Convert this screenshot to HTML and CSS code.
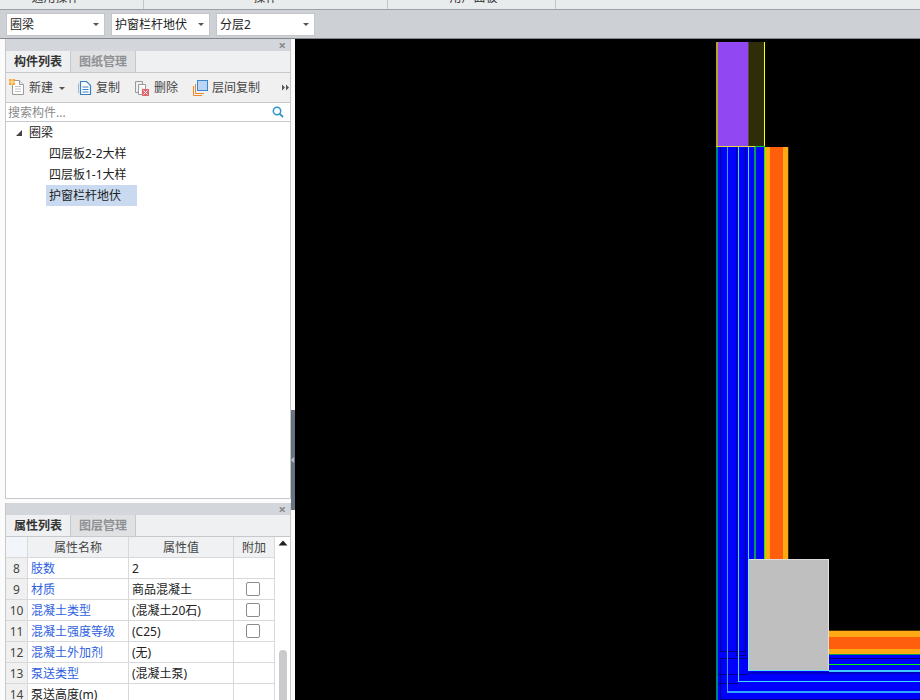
FILE: index.html
```html
<!DOCTYPE html>
<html lang="zh">
<head>
<meta charset="utf-8">
<title>圈梁</title>
<link rel="stylesheet" href="styles.css">
</head>
<body>
<div class="app">
  <div class="ribbon">
    <div class="rib rib-a"><span>通用操作</span></div>
    <div class="rib rib-b"><span>操作</span></div>
    <div class="rib rib-c"><span>用户面板</span></div>
  </div>
  <div class="selects">
    <div class="sel"><span>圈梁</span><i class="caret"></i></div>
    <div class="sel"><span>护窗栏杆地伏</span><i class="caret"></i></div>
    <div class="sel"><span>分层2</span><i class="caret"></i></div>
  </div>
  <div class="main">
    <div class="side">
      <section class="panel panel-top">
        <div class="ptitle"><span class="close">×</span></div>
        <div class="tabs">
          <div class="tab on">构件列表</div>
          <div class="tab off">图纸管理</div>
        </div>
        <div class="tools">
          <div class="tool t-new">
            <svg width="18" height="18" viewBox="0 0 18 18"><path d="M3.500 1.500H10.500L14.500 5.500V15.500H3.500Z" fill="#fff" stroke="#9a9a9a"/><path d="M10.500 1.500V5.500H14.500" fill="#eee" stroke="#9a9a9a"/><path d="M6 7.500H12M6 10H12M6 12.500H12" stroke="#c4c4c4"/><rect x="0" y="0" width="6" height="6" fill="#f9a83c"/><path d="M0 3H6M3 0V6" stroke="#fde6b8"/></svg>
            <span>新建</span><i class="caret mini"></i>
          </div>
          <div class="tool t-copy">
            <svg width="16" height="16" viewBox="0 0 16 16"><path d="M3.500 1.500H9.500L13.500 5.500V14.500H3.500Z" fill="#fff" stroke="#3a7fc4" stroke-width="1.200"/><path d="M1.500 3.500V13" stroke="#9db9d6"/><path d="M5.500 7H11.500M5.500 9.500H11.500M5.500 12H11.500" stroke="#3a7fc4"/></svg>
            <span>复制</span>
          </div>
          <div class="tool t-del">
            <svg width="16" height="16" viewBox="0 0 16 16"><path d="M1.500 1.500H8.500V4.500M1.500 1.500V12.500H4" fill="none" stroke="#9a9a9a"/><path d="M4.500 4.500H11.500V9M4.500 4.500V14.500H8" fill="#fff" stroke="#9a9a9a"/><rect x="8" y="9" width="7" height="7" fill="#e2636b"/><path d="M9.500 10.500L13.500 14.500M13.500 10.500L9.500 14.500" stroke="#fff"/></svg>
            <span>删除</span>
          </div>
          <div class="tool t-floor">
            <svg width="16" height="16" viewBox="0 0 16 16"><path d="M1.500 6V15.500H10" fill="none" stroke="#ee8a2e"/><path d="M3.500 4V13.500H12" fill="none" stroke="#ee8a2e"/><rect x="5.500" y="0.500" width="10" height="10" fill="#b9d6f7" stroke="#3d86cf"/></svg>
            <span>层间复制</span>
          </div>
          <div class="more">
            <svg width="7" height="7" viewBox="0 0 7 7"><path d="M0 0.500L3 3.500L0 6.500ZM4 0.500L7 3.500L4 6.500Z" fill="#555"/></svg>
          </div>
        </div>
        <div class="search">
          <span class="ph">搜索构件...</span>
          <svg width="12" height="12" viewBox="0 0 12 12"><circle cx="5" cy="5" r="3.700" fill="none" stroke="#2f95c8" stroke-width="1.500"/><path d="M7.800 7.800L11 11" stroke="#2f95c8" stroke-width="1.800"/></svg>
        </div>
        <div class="tree">
          <div class="node root"><i class="arrow"></i><span>圈梁</span></div>
          <div class="node leaf"><span>四层板2-2大样</span></div>
          <div class="node leaf"><span>四层板1-1大样</span></div>
          <div class="node leaf sel-row"><span>护窗栏杆地伏</span></div>
        </div>
      </section>
      <section class="panel panel-bot">
        <div class="ptitle"><span class="close">×</span></div>
        <div class="tabs">
          <div class="tab on">属性列表</div>
          <div class="tab off">图层管理</div>
        </div>
        <div class="props">
          <table class="grid">
            <colgroup><col class="c0"><col class="c1"><col class="c2"><col class="c3"></colgroup>
            <thead><tr><th class="corner"></th><th>属性名称</th><th>属性值</th><th>附加</th></tr></thead>
            <tbody>
              <tr><td class="n">8</td><td class="k">肢数</td><td>2</td><td></td></tr>
              <tr><td class="n">9</td><td class="k">材质</td><td>商品混凝土</td><td class="chk"><i class="box"></i></td></tr>
              <tr><td class="n">10</td><td class="k">混凝土类型</td><td>(混凝土20石)</td><td class="chk"><i class="box"></i></td></tr>
              <tr><td class="n">11</td><td class="k">混凝土强度等级</td><td>(C25)</td><td class="chk"><i class="box"></i></td></tr>
              <tr><td class="n">12</td><td class="k">混凝土外加剂</td><td>(无)</td><td></td></tr>
              <tr><td class="n">13</td><td class="k">泵送类型</td><td>(混凝土泵)</td><td></td></tr>
              <tr><td class="n">14</td><td class="k plain">泵送高度(m)</td><td></td><td></td></tr>
            </tbody>
          </table>
          <div class="vbar">
            <svg class="up" width="10" height="6" viewBox="0 0 10 6"><path d="M0.500 5.500L5 0.500L9.500 5.500Z" fill="#222"/></svg>
            <div class="thumb"></div>
          </div>
        </div>
      </section>
    </div>
    <div class="splitter"><div class="grip"><i></i></div></div>
    <div class="canvas">
      <svg class="cad" width="625" height="661" viewBox="295 39 625 661" shape-rendering="crispEdges">
        <rect x="295" y="39" width="625" height="661" fill="#000"/>
        <rect x="716" y="42" width="33" height="104" fill="#9148f2"/>
        <rect x="749" y="42" width="15" height="104" fill="#2f2d08"/>
        <rect x="716" y="42" width="2" height="104" fill="#b8a52c"/>
        <rect x="748" y="42" width="1" height="104" fill="#5a4640"/>
        <rect x="764" y="42" width="1" height="105" fill="#ffff00"/>
        <rect x="716" y="146" width="39" height="1" fill="#e8d83c"/>

        <rect x="716" y="147" width="49" height="553" fill="#0000ff"/>
        <rect x="716" y="655" width="204" height="45" fill="#0000ff"/>
        <rect x="765" y="147" width="23" height="413" fill="#ffaa14"/>
        <rect x="770" y="147" width="13" height="413" fill="#ff5f0c"/>
        <rect x="788" y="147" width="1" height="413" fill="#3a2a08"/>
        <rect x="764" y="147" width="1" height="413" fill="#00ff00"/>
        <rect x="754" y="147" width="2" height="413" fill="#00a050"/>
        <rect x="755" y="146" width="10" height="1" fill="#00d040"/>

        <rect x="716" y="147" width="2" height="553" fill="#008478"/>
        <rect x="720" y="147" width="1" height="505" fill="#00007a"/>
        <rect x="720" y="651" width="26" height="1" fill="#00007a"/>
        <rect x="745" y="147" width="1" height="508" fill="#00007a"/>
        <rect x="736" y="147" width="1" height="508" fill="#00007a"/>
        <rect x="736" y="655" width="10" height="1" fill="#00007a"/>
        <rect x="720" y="658" width="200" height="1" fill="#00007a"/>
        <rect x="720" y="658" width="1" height="42" fill="#00007a"/>
        <rect x="718" y="674" width="30" height="1" fill="#00007a"/>
        <rect x="718" y="683" width="20" height="1" fill="#00007a"/>
        <rect x="720" y="699" width="200" height="1" fill="#00007a"/>
        <rect x="749" y="672" width="171" height="2" fill="#0000c0"/>

        <rect x="727" y="147" width="1" height="545" fill="#30a8ff"/>
        <rect x="727" y="691" width="193" height="2" fill="#30a8ff"/>
        <rect x="738" y="147" width="1" height="535" fill="#40e0ff"/>
        <rect x="738" y="681" width="182" height="1" fill="#40e0ff"/>
        <rect x="748" y="147" width="1" height="413" fill="#40e0ff"/>

        <rect x="829" y="631" width="91" height="23" fill="#ffaa14"/>
        <rect x="829" y="637" width="91" height="12" fill="#ff5f0c"/>
        <rect x="829" y="630" width="91" height="1" fill="#4a3208"/>
        <rect x="829" y="654" width="91" height="1" fill="#00a050"/>
        <rect x="829" y="664" width="91" height="1" fill="#00ff00"/>
        <rect x="829" y="670" width="91" height="2" fill="#40c8ff"/>

        <rect x="749" y="560" width="80" height="110" fill="#bfbfbf"/>
        <rect x="749" y="559" width="80" height="1" fill="#dcdcdc"/>
        <rect x="828" y="560" width="1" height="111" fill="#e0e0e0"/>
        <rect x="748" y="560" width="1" height="111" fill="#80f0f8"/>
        <rect x="748" y="670" width="81" height="1" fill="#60e0f0"/>
      </svg>
    </div>
  </div>
</div>
</body>
</html>
```

FILE: styles.css
```css
* { box-sizing: border-box; }
html, body { margin: 0; padding: 0; }
body {
  width: 920px;
  height: 700px;
  overflow: hidden;
  font-family: "Noto Sans", "Noto Sans CJK SC", sans-serif;
  font-size: 12px;
  color: #222;
  background: #e9ebee;
}
.app { width: 920px; height: 700px; display: flex; flex-direction: column; }

.ribbon {
  height: 10px;
  flex: none;
  display: flex;
  background: #e9eced;
  border-bottom: 1px solid #9c9fa3;
  overflow: hidden;
}
.rib {
  height: 9px;
  border-right: 1px solid #c4c7ca;
  overflow: hidden;
  text-align: center;
}
.rib span { display: block; margin-top: -10px; line-height: 16px; font-size: 12px; color: #333; }
.rib-a { width: 144px; padding-right: 32px; }
.rib-b { width: 244px; }
.rib-c { width: 168px; padding-left: 4px; }

.selects {
  height: 29px;
  flex: none;
  display: flex;
  gap: 6px;
  padding: 3px 6px 0;
  background: #cdd0d4;
  border-bottom: 1px solid #85888c;
}
.sel {
  width: 99px;
  height: 23px;
  background: #fff;
  border: 1px solid #c4c6ca;
  display: flex;
  align-items: center;
  justify-content: space-between;
  padding: 0 5px 0 3px;
  font-size: 12px;
  line-height: 16px;
  color: #222;
}
.caret {
  width: 0;
  height: 0;
  border-left: 3px solid transparent;
  border-right: 3px solid transparent;
  border-top: 3px solid #555;
}
.caret.mini { margin-left: 4px; margin-top: 1px; }

.main { flex: 1; display: flex; min-height: 0; background: #f4f5f6; }
.side {
  width: 291px;
  flex: none;
  padding-left: 5px;
  display: flex;
  flex-direction: column;
  background: #fbfbfb;
}
.panel {
  border-left: 1px solid #c6c8cc;
  border-right: 1px solid #c6c8cc;
  background: #fff;
  display: flex;
  flex-direction: column;
}
.panel-top { height: 460px; border-bottom: 1px solid #c6c8cc; }
.panel-bot { flex: 1; margin-top: 4px; min-height: 0; overflow: hidden; }
.ptitle {
  height: 12px;
  flex: none;
  background: #d3d6db;
  display: flex;
  justify-content: flex-end;
  align-items: center;
  padding-right: 4px;
}
.close { font-size: 13px; line-height: 11px; font-weight: bold; color: #85888c; }

.tabs {
  height: 22px;
  flex: none;
  display: flex;
  background: #eff0f1;
  border-bottom: 1px solid #c6c8cc;
}
.tab {
  width: 65px;
  height: 21px;
  line-height: 21px;
  text-align: center;
  font-size: 12px;
  border-right: 1px solid #c6c8cc;
}
.tab.on { font-weight: bold; color: #333; }
.tab.off { background: #e0e1e3; color: #8f9093; font-weight: bold; }

.tools {
  height: 30px;
  flex: none;
  display: flex;
  align-items: center;
  background: #f0f0f1;
  border-bottom: 1px solid #c6c8cc;
  color: #444;
  line-height: 16px;
}
.tool { display: flex; align-items: center; gap: 4px; font-size: 12px; }
.tool span { padding-top: 1px; }
.t-new { margin-left: 3px; gap: 2px; }
.t-copy { margin-left: 12px; gap: 3px; }
.t-del { margin-left: 14px; }
.t-floor { margin-left: 14px; }
.more { margin-left: auto; margin-right: 1px; display: flex; }

.search {
  height: 19px;
  flex: none;
  display: flex;
  align-items: center;
  justify-content: space-between;
  padding: 0 6px 0 2px;
  border-bottom: 1px solid #c6c8cc;
  line-height: 16px;
}
.ph { color: #8a8a8a; font-size: 12px; padding-top: 1px; }

.tree { flex: 1; background: #fff; }
.node { height: 21px; display: flex; align-items: center; color: #222; font-size: 12px; }
.root { padding-left: 10px; line-height: 20px; }
.arrow {
  width: 0;
  height: 0;
  margin-right: 7px;
  border-left: 6px solid transparent;
  border-bottom: 6px solid #444;
}
.leaf { padding-left: 40px; }
.leaf span { display: block; height: 21px; line-height: 21px; padding: 0 3px; }
.sel-row span { background: #c9daf0; padding: 0 16px 0 3px; }

.props { flex: 1; display: flex; min-height: 0; overflow: hidden; }
.grid {
  width: 269px;
  flex: none;
  align-self: flex-start;
  border-collapse: separate;
  border-spacing: 0;
  table-layout: fixed;
  font-size: 12px;
  color: #222;
}
.c0 { width: 22px; }
.c1 { width: 101px; }
.c2 { width: 105px; }
.c3 { width: 41px; }
.grid th, .grid td {
  height: 21px;
  line-height: 18px;
  padding: 2px 0 0;
  border-right: 1px solid #d8d9db;
  border-bottom: 1px solid #d8d9db;
  overflow: hidden;
  white-space: nowrap;
}
.grid th { font-weight: normal; background: #f0f1f2; color: #444; text-align: center; }
.grid th.corner { background: #f2f5f9; }
.grid td { padding-left: 3px; background: #fff; }
.grid td.n { background: #f0f0f0; color: #444; text-align: center; padding: 2px 0 0; font-size: 12px; }
.grid td.k { color: #2e5fe0; }
.grid td.k.plain { color: #222; }
.grid td.chk { padding: 0; }
.box {
  display: block;
  width: 14px;
  height: 14px;
  margin: 0 0 0 12px;
  border: 1px solid #8c8c8c;
  border-radius: 2px;
  background: #fff;
}
.vbar {
  width: 15px;
  flex: none;
  background: #fff;
  display: flex;
  flex-direction: column;
  align-items: center;
  padding-top: 3px;
}
.up { flex: none; }
.thumb {
  width: 8px;
  height: 60px;
  flex: none;
  margin-top: 104px;
  border-radius: 4px;
  background: #c9cacb;
}

.splitter { width: 4px; flex: none; background: #fbfbfb; display: flex; align-items: flex-start; }
.grip {
  width: 4px;
  height: 100px;
  margin-top: 371px;
  background: #687380;
  display: flex;
  align-items: center;
}
.grip i {
  width: 0;
  height: 0;
  border-top: 3px solid transparent;
  border-bottom: 3px solid transparent;
  border-right: 3px solid #b9bfc6;
}
.canvas { flex: 1; min-width: 0; background: #000; }
.cad { display: block; }
```
